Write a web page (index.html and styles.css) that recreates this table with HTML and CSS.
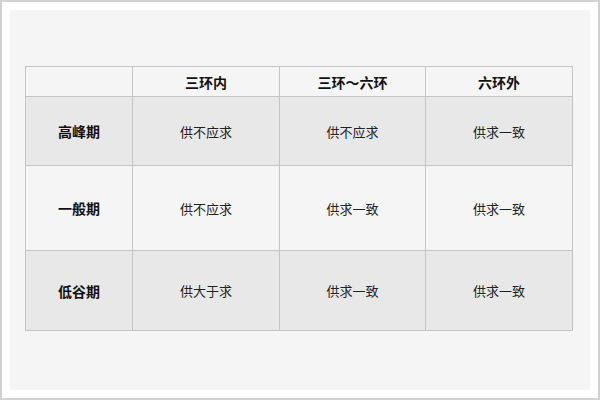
FILE: index.html
```html
<!DOCTYPE html>
<html lang="zh">
<head>
<meta charset="utf-8">
<link rel="stylesheet" href="styles.css">
</head>
<body>
<div class="frame">
  <div class="panel">
    <table class="grid">
      <colgroup>
        <col class="c0"><col class="c1"><col class="c2"><col class="c3">
      </colgroup>
      <tr class="head">
        <th></th><th>三环内</th><th>三环～六环</th><th>六环外</th>
      </tr>
      <tr class="r1 dark">
        <th>高峰期</th><td>供不应求</td><td>供不应求</td><td>供求一致</td>
      </tr>
      <tr class="r2">
        <th>一般期</th><td>供不应求</td><td>供求一致</td><td>供求一致</td>
      </tr>
      <tr class="r3 dark">
        <th>低谷期</th><td>供大于求</td><td>供求一致</td><td>供求一致</td>
      </tr>
    </table>
  </div>
</div>
</body>
</html>
```
FILE: styles.css
```css
html, body {
  margin: 0;
  padding: 0;
}
body {
  font-family: "Noto Sans CJK SC", "Liberation Sans", sans-serif;
  color: #222;
}
.frame {
  width: 600px;
  height: 400px;
  box-sizing: border-box;
  border: 2px solid #d2d2d2;
  padding: 8px;
  background: #fff;
}
.panel {
  height: 100%;
  box-sizing: border-box;
  background: #f5f5f5;
  padding: 56px 0 0 15px;
}
.grid {
  border-collapse: collapse;
  width: 548px;
  table-layout: fixed;
}
.c0 { width: 107px; }
.c1 { width: 147px; }
.c2 { width: 146px; }
.c3 { width: 147px; }
.grid th, .grid td {
  border: 1px solid #c4c4c4;
  text-align: center;
  vertical-align: middle;
  padding: 0;
  line-height: 1;
}
.grid th {
  font-size: 14px;
  font-weight: bold;
  color: #111;
}
.grid td {
  font-size: 13px;
  color: #222;
}
.head { height: 30px; }
.r1 { height: 69px; }
.r2 { height: 85px; }
.r3 { height: 80px; }
.dark { background: #e8e8e8; }
```
